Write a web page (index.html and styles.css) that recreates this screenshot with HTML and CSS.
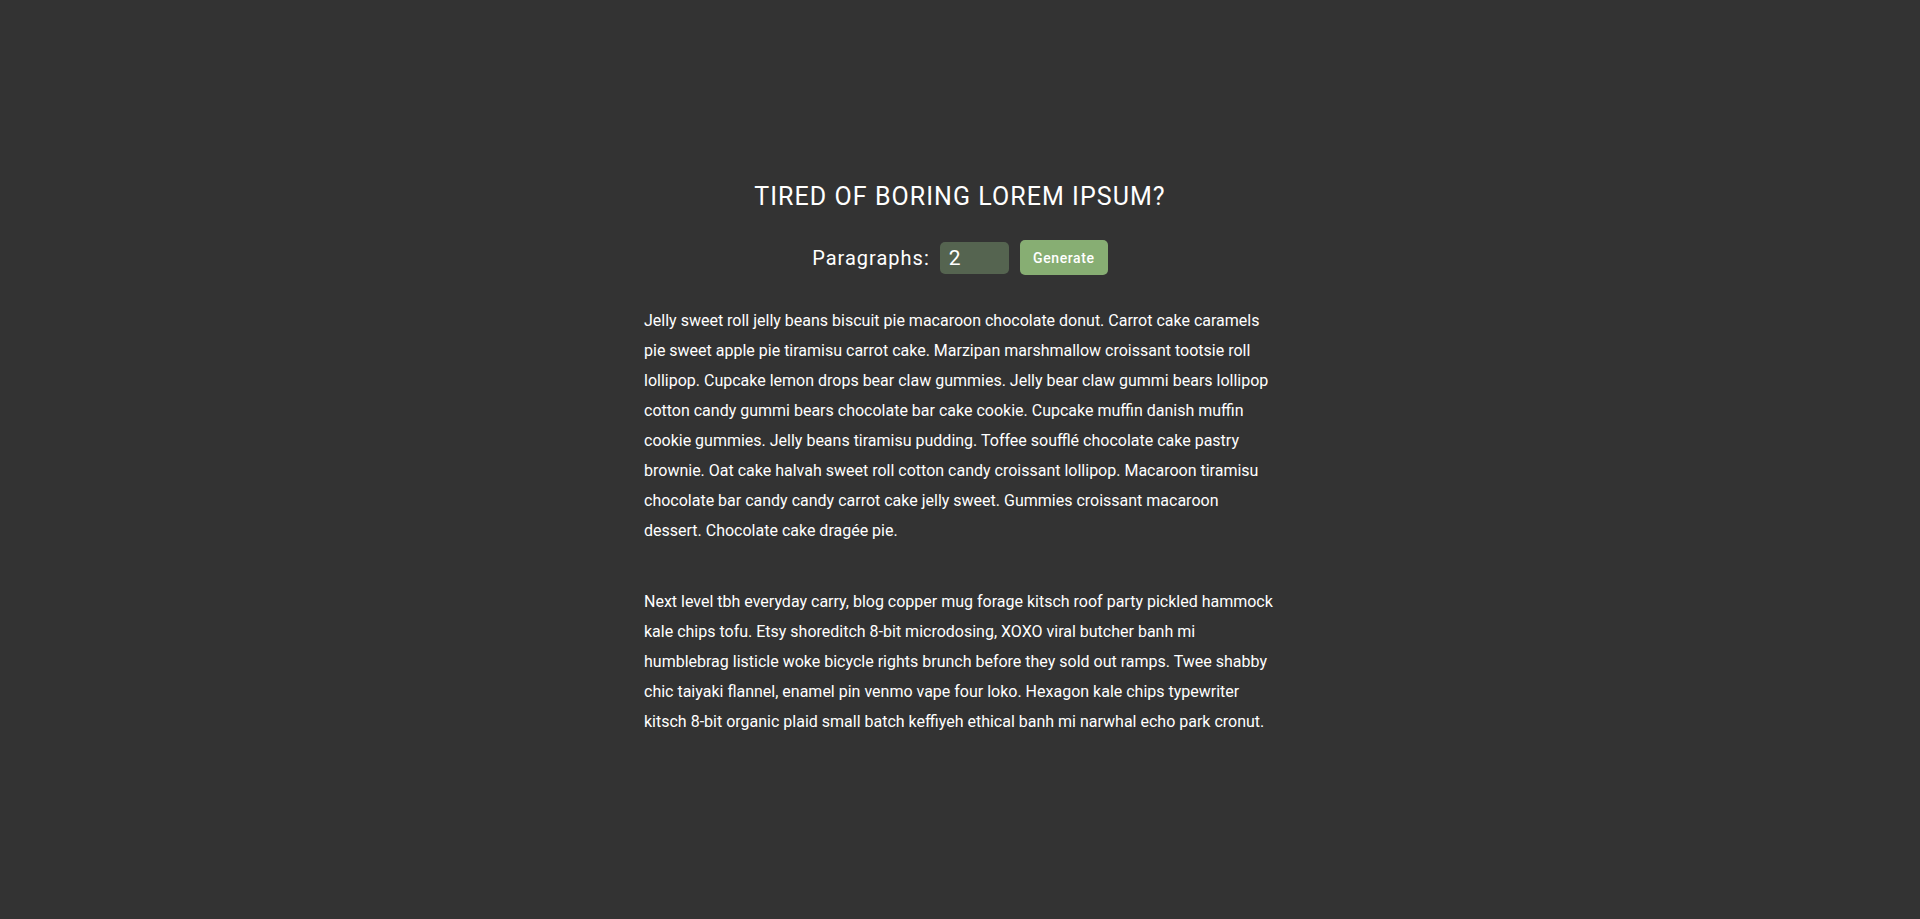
FILE: index.html
```html
<!DOCTYPE html>
<html lang="en">
<head>
<meta charset="utf-8">
<title>Lorem Ipsum Generator</title>
<link rel="stylesheet" href="styles.css">
</head>
<body>
<section class="section-center">
  <h3 class="title">tired of boring lorem ipsum?</h3>
  <form class="lorem-form">
    <label class="label" for="amount">paragraphs:</label>
    <input class="amount" type="number" id="amount" name="amount" value="2">
    <button class="btn" type="submit">generate</button>
  </form>
  <article class="lorem-text">
    <p class="para">Jelly sweet roll jelly beans biscuit pie macaroon chocolate donut. Carrot cake caramels pie sweet apple pie tiramisu carrot cake. Marzipan marshmallow croissant tootsie roll lollipop. Cupcake lemon drops bear claw gummies. Jelly bear claw gummi bears lollipop cotton candy gummi bears chocolate bar cake cookie. Cupcake muffin danish muffin cookie gummies. Jelly beans tiramisu pudding. Toffee soufflé chocolate cake pastry brownie. Oat cake halvah sweet roll cotton candy croissant lollipop. Macaroon tiramisu chocolate bar candy candy carrot cake jelly sweet. Gummies croissant macaroon dessert. Chocolate cake dragée pie.</p>
    <p class="para">Next level tbh everyday carry, blog copper mug forage kitsch roof party pickled hammock kale chips tofu. Etsy shoreditch 8-bit microdosing, XOXO viral butcher banh mi humblebrag listicle woke bicycle rights brunch before they sold out ramps. Twee shabby chic taiyaki flannel, enamel pin venmo vape four loko. Hexagon kale chips typewriter kitsch 8-bit organic plaid small batch keffiyeh ethical banh mi narwhal echo park cronut.</p>
  </article>
</section>
</body>
</html>
```

FILE: styles.css
```css
* {
  box-sizing: border-box;
}

html, body {
  margin: 0;
  padding: 0;
}

body {
  background: #333333;
  color: #ffffff;
  font-family: Roboto, "Liberation Sans", sans-serif;
  min-height: 919px;
}

.section-center {
  width: 632px;
  margin: 0 auto;
  padding-top: 182px;
}

.title {
  margin: 0;
  text-align: center;
  text-transform: uppercase;
  font-size: 25px;
  font-weight: 400;
  letter-spacing: 1.05px;
  line-height: 30px;
}

.lorem-form {
  margin-top: 28px;
  display: flex;
  justify-content: center;
  align-items: center;
}

.label {
  text-transform: capitalize;
  font-size: 20px;
  letter-spacing: 1px;
  margin-right: 10px;
}

.amount {
  width: 69px;
  height: 32px;
  border: none;
  border-radius: 5px;
  background: #556450;
  color: #ffffff;
  font-family: Roboto, "Liberation Sans", sans-serif;
  font-size: 21px;
  padding: 0 9px;
  margin-right: 11px;
  outline: none;
}

.btn {
  width: 88px;
  height: 35px;
  border: none;
  border-radius: 5px;
  background: #87ae73;
  color: #ffffff;
  font-family: Roboto, "Liberation Sans", sans-serif;
  font-size: 14px;
  font-weight: 500;
  letter-spacing: 0.6px;
  text-transform: capitalize;
  cursor: pointer;
}

.lorem-text {
  margin-top: 31px;
}

.para {
  margin: 0 0 41px;
  font-size: 16px;
  line-height: 30px;
}
```
